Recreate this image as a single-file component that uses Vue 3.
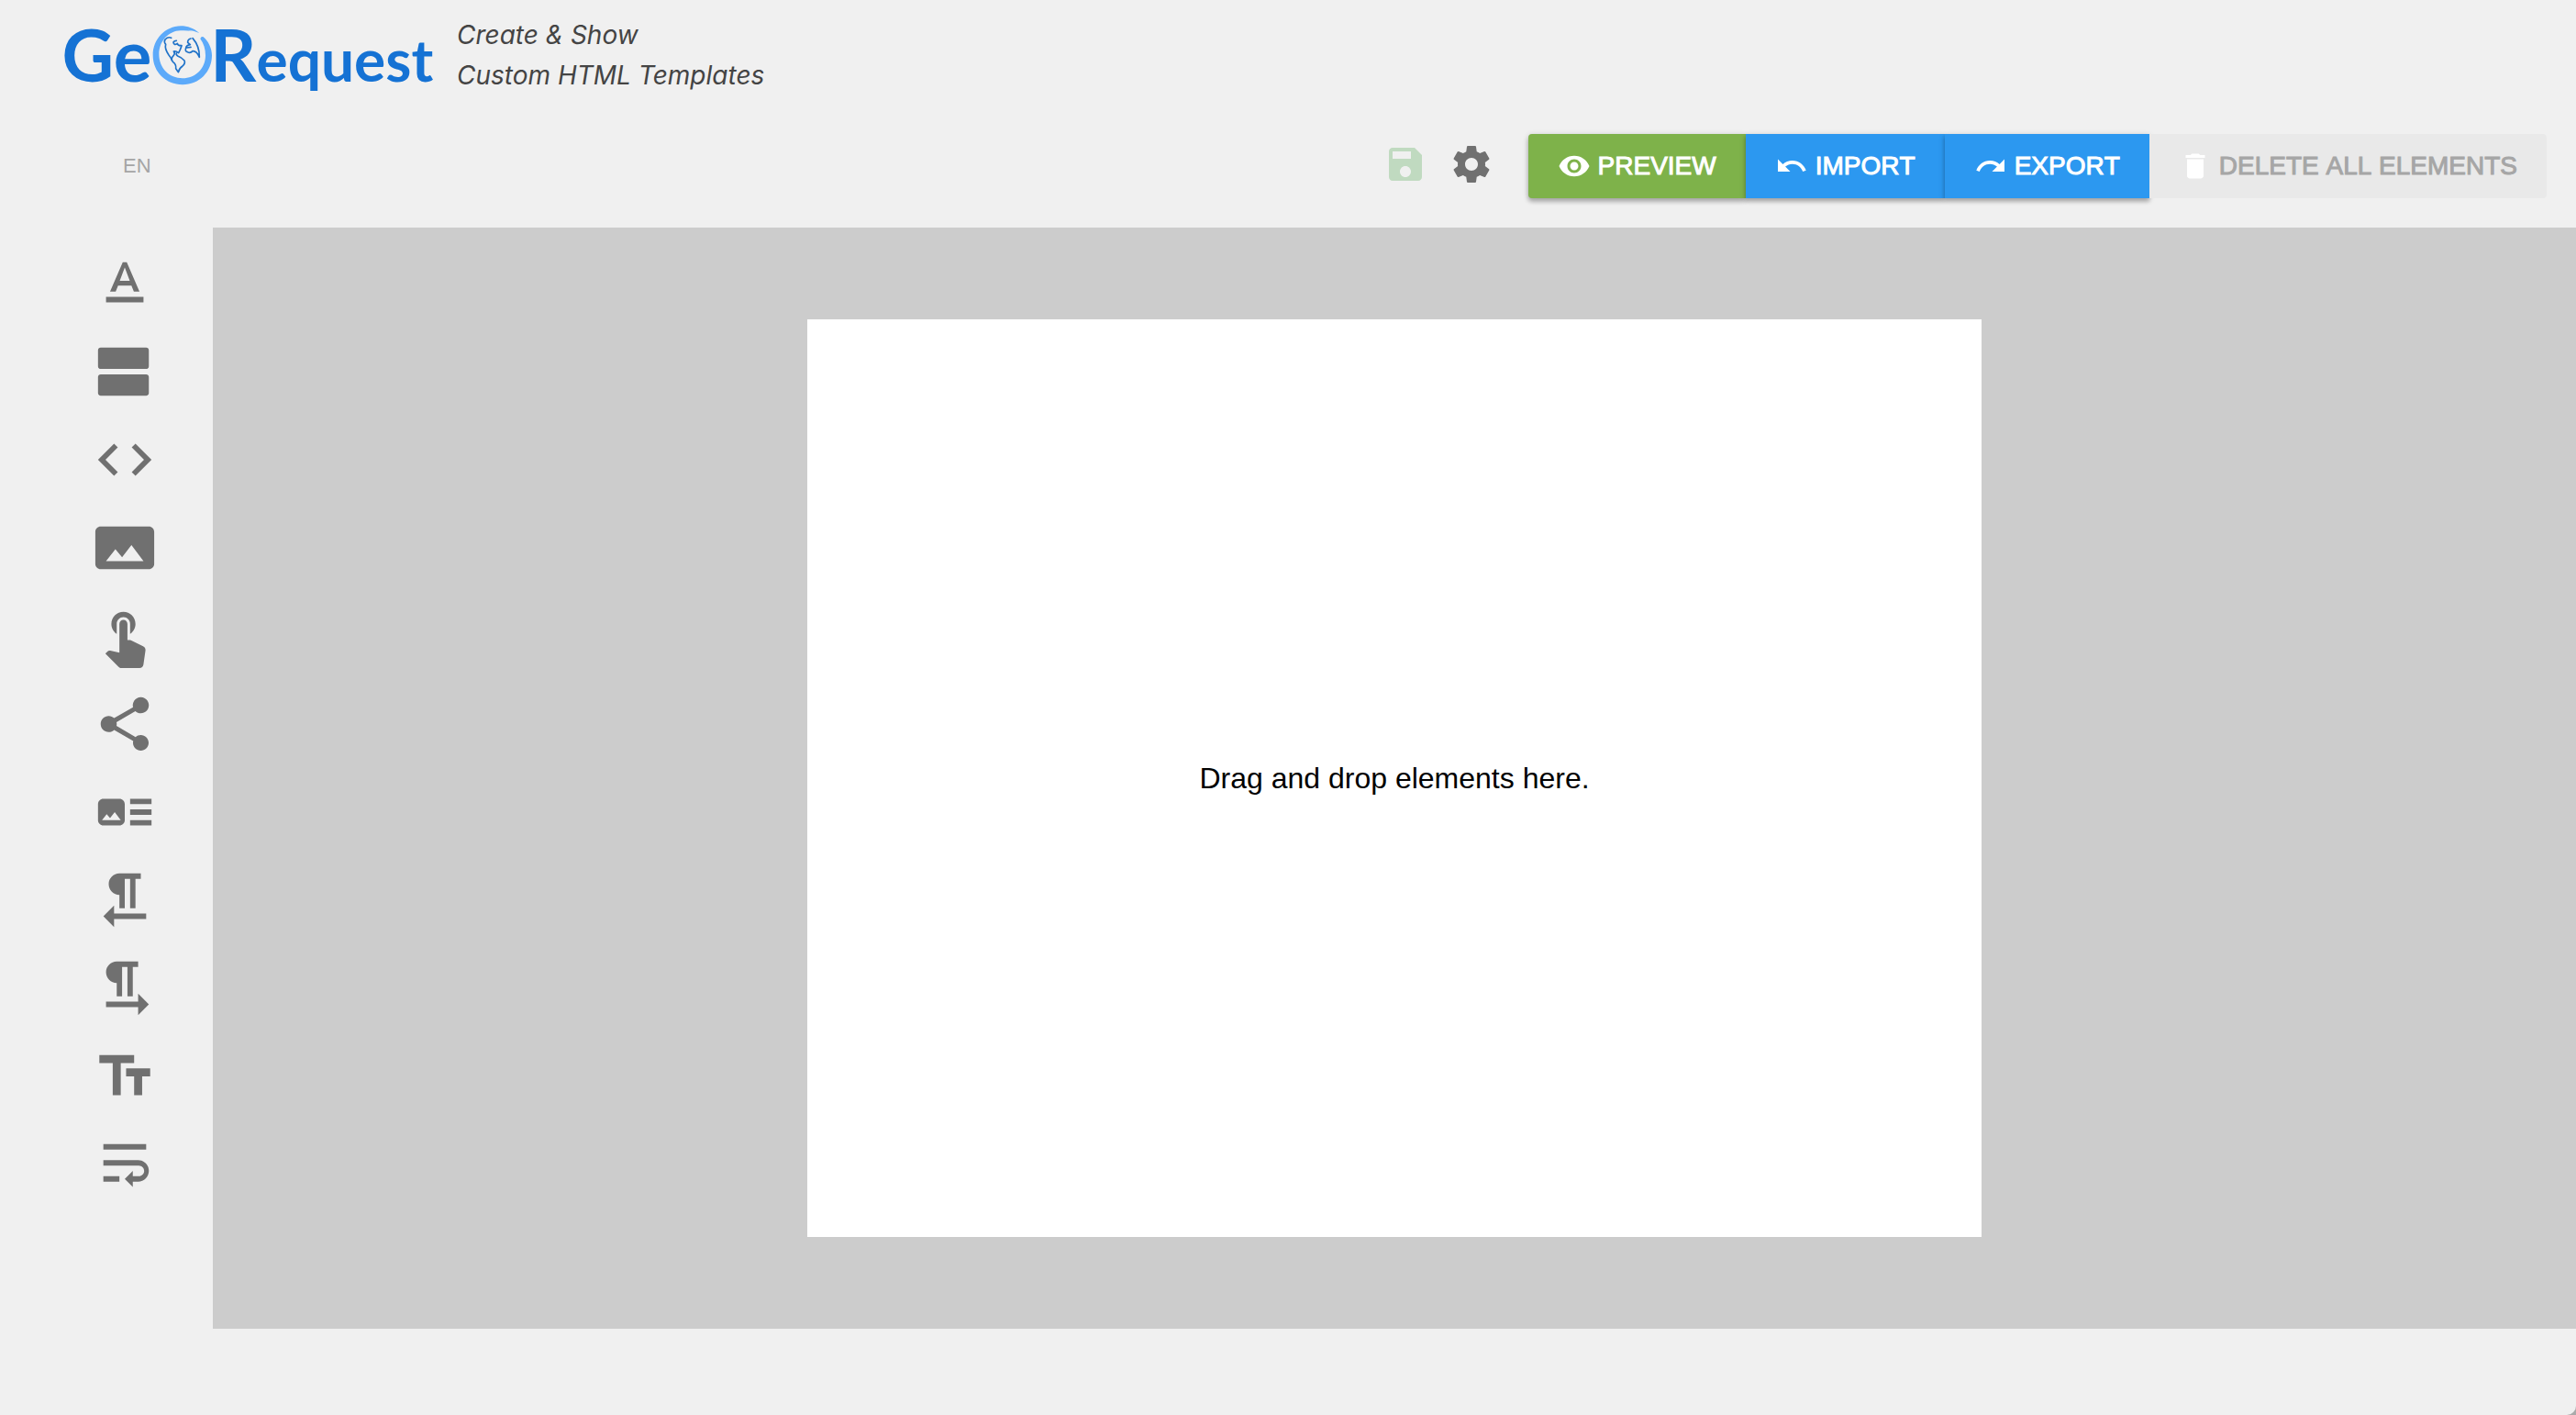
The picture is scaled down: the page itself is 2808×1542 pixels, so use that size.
<script setup>
const tools = [
  { name: 'Text', path: 'M5 17v2h14v-2H5zm4.5-4.2h5l.9 2.2h2.1L12.75 4h-1.5L6.5 15h2.1l.9-2.2zM12 5.98L13.87 11h-3.74L12 5.98z' },
  { name: 'Section', path: 'M20 13H3c-.55 0-1 .45-1 1v6c0 .55.45 1 1 1h17c.55 0 1-.45 1-1v-6c0-.55-.45-1-1-1zm0-10H3c-.55 0-1 .45-1 1v6c0 .55.45 1 1 1h17c.55 0 1-.45 1-1V4c0-.55-.45-1-1-1z' },
  { name: 'Code', path: 'M9.4 16.6L4.8 12l4.6-4.6L8 6l-6 6 6 6 1.4-1.4zm5.2 0l4.6-4.6-4.6-4.6L16 6l6 6-6 6-1.4-1.4z' },
  { name: 'Image', path: 'M23 18V6c0-1.1-.9-2-2-2H3c-1.1 0-2 .9-2 2v12c0 1.1.9 2 2 2h18c1.1 0 2-.9 2-2zM8.5 12.5l2.5 3.01L14.5 11l4.5 6H5l3.5-4.5z' },
  { name: 'Button', path: 'M9 11.24V7.5C9 6.12 10.12 5 11.5 5S14 6.12 14 7.5v3.74c1.21-.81 2-2.18 2-3.74C16 5.01 13.99 3 11.5 3S7 5.01 7 7.5c0 1.56.79 2.93 2 3.74zm9.84 4.63l-4.54-2.26c-.17-.07-.35-.11-.54-.11H13v-6c0-.83-.67-1.5-1.5-1.5S10 6.67 10 7.5v10.74l-3.43-.72c-.08-.01-.15-.03-.24-.03-.31 0-.59.13-.79.33l-.79.8 4.94 4.94c.27.27.65.44 1.06.44h6.79c.75 0 1.33-.55 1.44-1.28l.75-5.27c.01-.07.02-.14.02-.2 0-.62-.38-1.16-.91-1.38z' },
  { name: 'Share', path: 'M18 16.08c-.76 0-1.44.3-1.96.77L8.91 12.7c.05-.23.09-.46.09-.7s-.04-.47-.09-.7l7.05-4.11c.54.5 1.25.81 2.04.81 1.66 0 3-1.34 3-3s-1.34-3-3-3-3 1.34-3 3c0 .24.04.47.09.7L8.04 9.81C7.5 9.31 6.79 9 6 9c-1.66 0-3 1.34-3 3s1.34 3 3 3c.79 0 1.5-.31 2.04-.81l7.12 4.16c-.05.21-.08.43-.08.65 0 1.61 1.31 2.92 2.92 2.92 1.61 0 2.92-1.31 2.92-2.92s-1.31-2.92-2.92-2.92z' },
  { name: 'Image and text', path: 'M22 13h-8v-2h8v2zm0-6h-8v2h8V7zm-8 10h8v-2h-8v2zm-2-8v6c0 1.1-.9 2-2 2H4c-1.1 0-2-.9-2-2V9c0-1.1.9-2 2-2h6c1.1 0 2 .9 2 2zm-1.5 6l-2.25-3-1.75 2.26-1.25-1.51L3.5 15h7z' },
  { name: 'Right to left', path: 'M10 10v5h2V4h2v11h2V4h2V2h-8C7.79 2 6 3.79 6 6s1.79 4 4 4zm-2 7v-3l-4 4 4 4v-3h12v-2H8z' },
  { name: 'Left to right', path: 'M9 10v5h2V4h2v11h2V4h2V2H9C6.79 2 5 3.79 5 6s1.79 4 4 4zm12 8l-4-4v3H5v2h12v3l4-4z' },
  { name: 'Heading', path: 'M2.5 4v3h5v12h3V7h5V4h-13zm19 5h-9v3h3v7h3v-7h3V9z' },
  { name: 'Wrap text', path: 'M4 18.4h6v-2H4v2zM20 4.4H4v2h16v-2zm-3 6H4v2h13.25c1.1 0 2 .9 2 2s-.9 2-2 2H15v-2l-3 3 3 3v-2h2c2.21 0 4-1.79 4-4s-1.79-4-4-4z' }
]

const actions = [
  { label: 'PREVIEW', kind: 'preview', path: 'M12 4.5C7 4.5 2.73 7.61 1 12c1.73 4.39 6 7.5 11 7.5s9.27-3.11 11-7.5c-1.73-4.39-6-7.5-11-7.5zM12 17c-2.76 0-5-2.24-5-5s2.24-5 5-5 5 2.24 5 5-2.24 5-5 5zm0-8c-1.66 0-3 1.34-3 3s1.34 3 3 3 3-1.34 3-3-1.34-3-3-3z' },
  { label: 'IMPORT', kind: 'transfer', path: 'M12.5 8c-2.65 0-5.05.99-6.9 2.6L2 7v9h9l-3.62-3.62c1.39-1.16 3.16-1.88 5.12-1.88 3.54 0 6.55 2.31 7.6 5.5l2.37-.78C21.08 11.03 17.15 8 12.5 8z' },
  { label: 'EXPORT', kind: 'transfer', path: 'M18.4 10.6C16.55 8.99 14.15 8 11.5 8c-4.65 0-8.58 3.03-9.96 7.22L3.9 16c1.05-3.19 4.05-5.5 7.6-5.5 1.95 0 3.73.72 5.12 1.88L13 16h9V7l-3.6 3.6z' },
  { label: 'DELETE ALL ELEMENTS', kind: 'delete', disabled: true, path: 'M6 19c0 1.1.9 2 2 2h8c1.1 0 2-.9 2-2V7H6v12zM19 4h-3.5l-1-1h-5l-1 1H5v2h14V4z' }
]
</script>

<template>
  <div class="page">
    <header>
      <div class="brand">
        <svg class="logo" viewBox="60 0 1200 390" role="img" aria-label="GeoRequest">
          <text class="wordmark" x="346" y="267" text-anchor="end"><tspan class="capital">Ge</tspan></text>
          <path class="ring" fill-rule="evenodd" d="M502 108C484 93 464 85 441 85C390 86 350 128 350 181C350 235 392 277 447 277C502 277 543 234 543 181C543 158 531 133 514 120Q507 118 505 127C516 142 522 160 522 181C522 225 489 256 447 256C403 256 370 222 370 178C370 134 402 101 440 100Q461 98 476 103L464 98Q482 99 502 108Z" />
          <g class="land">
            <path d="M410 124Q400 119 390 129Q385 137 392 145C388 158 395 170 402 180Q408 187 412 196" />
            <path d="M427 133Q420 133 417 138Q419 150 430 142Q431 150 444 149Q440 162 434 173Q424 165 418 168Q424 173 418 181Q406 192 416 203Q427 211 425 224Q430 231 433 236Q437 222 447 216Q457 207 453 198Q445 188 431 183Q425 179 427 174" />
            <path d="M474 126Q463 129 464 139L472 146Q459 148 458 157Q454 168 463 170Q472 176 480 167Q493 166 502 187Q503 151 480 125M461 156L474 154" />
          </g>
          <text class="wordmark" x="538" y="267"><tspan class="capital">R</tspan>equest</text>
        </svg>
        <p class="tagline">Create &amp; Show<br>Custom HTML Templates</p>
      </div>
      <div class="toolbar">
        <button class="language" type="button">EN</button>
        <div class="controls">
          <button class="icon-button save" type="button" aria-label="Save" disabled>
            <svg viewBox="0 0 24 24"><path d="M17 3H5c-1.11 0-2 .9-2 2v14c0 1.1.89 2 2 2h14c1.1 0 2-.9 2-2V7l-4-4zm-5 16c-1.66 0-3-1.34-3-3s1.34-3 3-3 3 1.34 3 3-1.34 3-3 3zm3-10H5V5h10v4z" /></svg>
          </button>
          <button class="icon-button" type="button" aria-label="Settings">
            <svg viewBox="0 0 24 24"><path d="M19.43 12.98c.04-.32.07-.64.07-.98s-.03-.66-.07-.98l2.11-1.65c.19-.15.24-.42.12-.64l-2-3.46c-.12-.22-.39-.3-.61-.22l-2.49 1c-.52-.4-1.08-.73-1.69-.98l-.38-2.65C14.46 2.18 14.25 2 14 2h-4c-.25 0-.46.18-.49.42l-.38 2.65c-.61.25-1.17.59-1.69.98l-2.49-1c-.23-.09-.49 0-.61.22l-2 3.46c-.13.22-.07.49.12.64l2.11 1.65c-.04.32-.07.65-.07.98s.03.66.07.98l-2.11 1.65c-.19.15-.24.42-.12.64l2 3.46c.12.22.39.3.61.22l2.49-1c.52.4 1.08.73 1.69.98l.38 2.65c.03.24.24.42.49.42h4c.25 0 .46-.18.49-.42l.38-2.65c.61-.25 1.17-.59 1.69-.98l2.49 1c.23.09.49 0 .61-.22l2-3.46c.12-.22.07-.49-.12-.64l-2.11-1.65zM12 15.5c-1.93 0-3.5-1.57-3.5-3.5s1.57-3.5 3.5-3.5 3.5 1.57 3.5 3.5-1.57 3.5-3.5 3.5z" /></svg>
          </button>
          <div class="actions">
            <button
              v-for="action in actions"
              :key="action.label"
              type="button"
              class="action"
              :class="action.kind"
              :disabled="action.disabled"
            >
              <svg viewBox="0 0 24 24" aria-hidden="true"><path :d="action.path" /></svg>
              <span>{{ action.label }}</span>
            </button>
          </div>
        </div>
      </div>
    </header>
    <div class="workspace">
      <nav class="tools" aria-label="Elements">
        <button v-for="tool in tools" :key="tool.name" type="button" class="tool" draggable="true" :aria-label="tool.name">
          <svg viewBox="0 0 24 24"><path :d="tool.path" /></svg>
        </button>
      </nav>
      <main class="canvas">
        <section class="template">
          <p>Drag and drop elements here.</p>
        </section>
      </main>
    </div>
  </div>
</template>

<style>
html {
  background: #aaa;
}
</style>

<style scoped>
.page {
  box-sizing: border-box;
  min-height: 100vh;
  background: #f0f0f0;
  border-bottom-right-radius: 10px;
  font-family: "Liberation Sans", Arial, sans-serif;
}

button {
  margin: 0;
  padding: 0;
  border: 0;
  background: none;
  font: inherit;
  color: inherit;
}

svg {
  display: block;
  fill: currentColor;
}

p {
  margin: 0;
}

.brand {
  display: flex;
  align-items: flex-start;
  gap: 28px;
  padding-left: 70px;
}

.logo {
  width: 400px;
  height: 130px;
  overflow: visible;
}

.wordmark {
  fill: #1572d4;
  font-family: Lato, sans-serif;
  font-size: 192px;
  font-weight: 700;
}

.capital {
  font-size: 234px;
}

.ring {
  fill: #5caafa;
}

.land {
  fill: none;
  stroke: #1f72c8;
  stroke-width: 5;
  stroke-linejoin: round;
  stroke-linecap: round;
}

.tagline {
  padding-top: 16px;
  color: #444;
  font-family: Inter, sans-serif;
  font-size: 28px;
  font-style: italic;
  line-height: 44px;
}

.toolbar {
  display: flex;
  align-items: center;
  justify-content: space-between;
  padding: 16px 32px 32px 134px;
}

.language {
  color: #a5a5a5;
  font-size: 22px;
}

.controls {
  display: flex;
  align-items: center;
  gap: 24px;
}

.icon-button {
  padding-bottom: 4px;
  color: #707070;
}

.icon-button svg {
  width: 48px;
  height: 48px;
}

.save {
  color: #c0dac0;
}

.actions {
  display: flex;
  margin-left: 14px;
}

.action {
  display: flex;
  align-items: center;
  gap: 8px;
  height: 70px;
  padding: 0 32px;
  color: #fff;
  font-size: 28px;
  font-kerning: none;
  -webkit-text-stroke: 1px currentColor;
  box-shadow: 0 4px 4px rgba(0, 0, 0, 0.16), 0 2px 6px rgba(0, 0, 0, 0.24);
}

.action svg {
  width: 36px;
  height: 36px;
}

.action:first-child {
  border-radius: 4px 0 0 4px;
}

.action:last-child {
  border-radius: 0 4px 4px 0;
}

.preview {
  background: #7eb24a;
}

.transfer {
  background: #2c98f0;
}

.delete {
  background: #e9e9e9;
  color: #a6a6a6;
  box-shadow: none;
}

.delete svg {
  color: #fff;
}

.workspace {
  display: flex;
}

.tools {
  display: flex;
  flex: none;
  flex-direction: column;
  align-items: center;
  gap: 26px;
  box-sizing: border-box;
  width: 232px;
  padding: 26px 0 0 40px;
}

.tool {
  color: #707070;
}

.tool svg {
  width: 70px;
  height: 70px;
}

.canvas {
  display: flex;
  flex: 1;
  justify-content: center;
  padding: 100px;
  background: #ccc;
}

.template {
  display: flex;
  align-items: center;
  justify-content: center;
  width: 1280px;
  min-height: 1000px;
  background: #fff;
  color: #000;
  font-size: 32px;
}
</style>
